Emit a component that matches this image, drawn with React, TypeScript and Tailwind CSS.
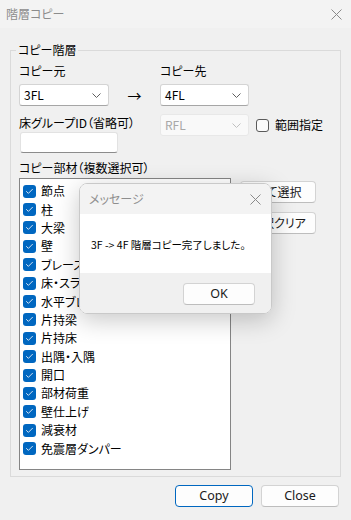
import { Check } from 'lucide-react'

const parts = [
  '節点',
  '柱',
  '大梁',
  '壁',
  'ブレース',
  '床・スラブ',
  '水平ブレース',
  '片持梁',
  '片持床',
  '出隅・入隅',
  '開口',
  '部材荷重',
  '壁仕上げ',
  '減衰材',
  '免震層ダンパー',
]

const font = { fontFamily: '"Noto Sans CJK JP", "Noto Sans", sans-serif' }

function CloseX({ className = '' }: { className?: string }) {
  return (
    <svg width="11" height="11" viewBox="0 0 11 11" className={className}>
      <path d="M0.5 0.5L10.5 10.5M10.5 0.5L0.5 10.5" stroke="currentColor" strokeWidth="1" />
    </svg>
  )
}

function Chevron({ color = '#5f5f5f' }: { color?: string }) {
  return (
    <svg width="9" height="5" viewBox="0 0 9 5">
      <path d="M0.5 0.5L4.5 4.5L8.5 0.5" stroke={color} strokeWidth="1" fill="none" />
    </svg>
  )
}

function Select({ value, width, disabled }: { value: string; width: string; disabled?: boolean }) {
  return (
    <div
      className={`${width} h-[22px] flex items-center justify-between pl-[4px] pr-[7px] rounded-[3px] border ${
        disabled
          ? 'bg-[#f9f9f9] border-[#e8e8e8] text-[#a8a8a8]'
          : 'bg-white border-[#d4d4d4] border-b-[#a6a6a6] text-black'
      }`}
    >
      <span>{value}</span>
      <Chevron color={disabled ? '#c0c0c0' : '#5f5f5f'} />
    </div>
  )
}

function Button({ label, primary, className = '' }: { label: string; primary?: boolean; className?: string }) {
  return (
    <button
      className={`h-[22px] rounded-[4px] bg-[#fdfdfd] border text-[12.5px] text-[#1a1a1a] ${
        primary ? 'border-[#0067c0]' : 'border-[#d3d3d3] border-b-[#bdbdbd]'
      } ${className}`}
    >
      {label}
    </button>
  )
}

export default function App() {
  return (
    <div
      className="relative w-[351px] h-[520px] bg-[#f0f0f0] overflow-hidden text-[12px] text-black [font-feature-settings:'palt']"
      style={font}
    >
      {/* Title bar */}
      <div className="h-[28px] flex items-center justify-between pl-[6px] pr-[9px] bg-[#f3f3f3]">
        <span className="text-[12px] text-[#8c8c8c]">階層コピー</span>
        <CloseX className="text-[#8a8a8a]" />
      </div>

      {/* Group box */}
      <div className="relative ml-[10px] mt-[22px] w-[331px] h-[427px] border border-[#dadada]">
        <span className="absolute left-[5px] -top-[9px] px-[2px] bg-[#f0f0f0] leading-[16px]">コピー階層</span>

        <div className="pl-[8px] pt-[12px] leading-[16px]">
          <div className="flex">
            <span className="w-[141px]">コピー元</span>
            <span>コピー先</span>
          </div>

          <div className="flex items-center mt-[5px]">
            <Select value="3FL" width="w-[90px]" />
            <span className="w-[51px] text-center text-[14px]">→</span>
            <Select value="4FL" width="w-[89px]" />
          </div>

          <div className="flex mt-[8px]">
            <div className="w-[141px] flex flex-col">
              <span className="mt-[1px] whitespace-nowrap">床グループID（省略可）</span>
              <div className="mt-[1px] ml-[1px] w-[98px] h-[21px] bg-white rounded-[3px] border border-[#e2e2e2] border-b-[#8c8c8c]" />
            </div>
            <div className="flex items-start">
              <Select value="RFL" width="w-[89px]" disabled />
              <div className="flex items-center ml-[7px] mt-[3px] gap-[6px]">
                <span className="w-[13px] h-[13px] rounded-[3px] border border-[#5a5a5a] bg-[#fbfbfb]" />
                <span>範囲指定</span>
              </div>
            </div>
          </div>

          <div className="mt-[7px]">コピー部材（複数選択可）</div>

          <div className="flex mt-[2px]">
            <div className="w-[212px] h-[292px] bg-white border border-[#858585] pl-[3px] pt-[3px]">
              {parts.map((p) => (
                <div key={p} className="h-[18.4px] flex items-center gap-[5px]">
                  <span className="w-[13px] h-[13px] rounded-[3px] bg-[#0067c0] flex items-center justify-center">
                    <Check size={9} strokeWidth={2.5} color="#dfe9f5" />
                  </span>
                  <span>{p}</span>
                </div>
              ))}
            </div>
            <div className="flex flex-col ml-[9px] mt-[3px] gap-[9px]">
              <Button label="全て選択" className="w-[76px] text-[12px]" />
              <Button label="選択クリア" className="w-[76px] text-[12px]" />
            </div>
          </div>
        </div>
      </div>

      {/* Bottom buttons */}
      <div className="flex justify-end gap-[8px] pr-[12px] mt-[8px]" style={{ fontFamily: '"Noto Sans", sans-serif' }}>
        <Button label="Copy" primary className="w-[78px]" />
        <Button label="Close" className="w-[78px]" />
      </div>

      {/* Message dialog */}
      <div className="absolute left-[79px] top-[183px] w-[193px] h-[131px] rounded-[8px] overflow-hidden border border-[#c9c9c9] shadow-[0_6px_24px_rgba(0,0,0,0.22)] flex flex-col">
        <div className="h-[30px] bg-[#f3f3f3] flex items-center justify-between pl-[9px] pr-[10px]">
          <span className="text-[#8e8e8e]">メッセージ</span>
          <CloseX className="text-[#8a8a8a]" />
        </div>
        <div className="h-[59px] bg-white flex items-center pl-[11px] pt-[2px]">
          <span className="whitespace-nowrap text-[10.5px]">3F -&gt; 4F 階層コピー完了しました。</span>
        </div>
        <div className="flex-1 bg-[#f0f0f0] flex justify-end pr-[16px] pt-[10px]" style={{ fontFamily: '"Noto Sans", sans-serif' }}>
          <Button label="OK" className="w-[72px] h-[21px] text-[11.5px]" />
        </div>
      </div>
    </div>
  )
}
